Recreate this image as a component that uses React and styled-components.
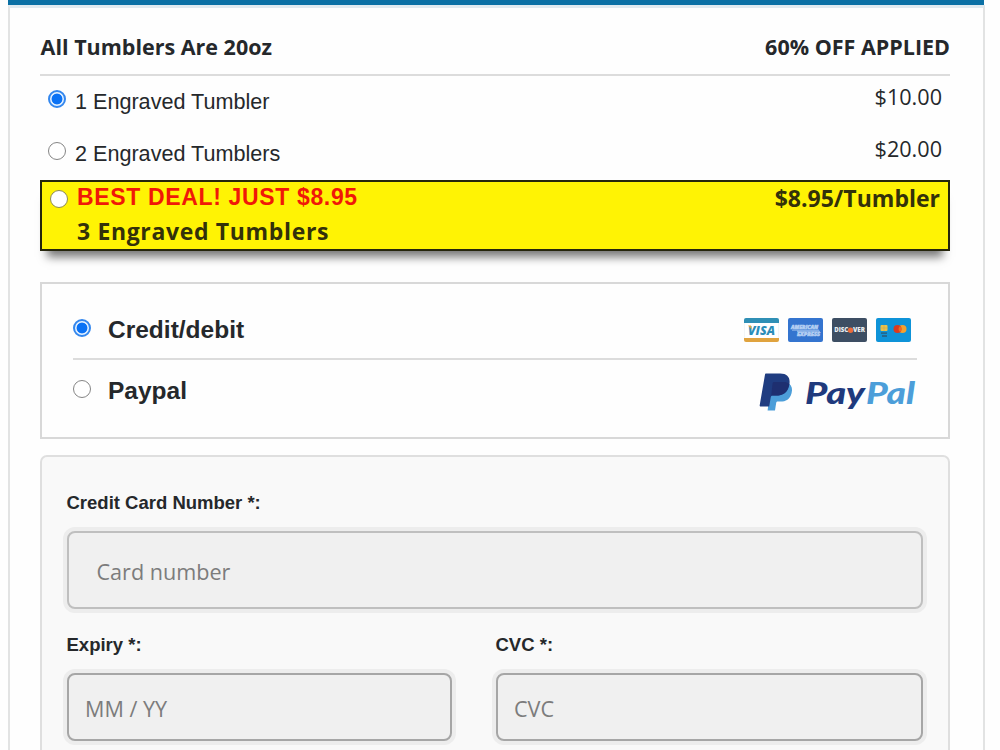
import React from "react";
import styled, { createGlobalStyle, css } from "styled-components";

const openSans = `"Open Sans", "Noto Sans", sans-serif`;
const arial = `"Liberation Sans", Arial, sans-serif`;

const App = () => {
  return (
    <Page>
      <GlobalStyle />
      <TopBar />
      <Panel>
        <Header>
          <HeaderText>All Tumblers Are 20oz</HeaderText>
          <HeaderText>60% OFF APPLIED</HeaderText>
        </Header>
        <Option>
          <Radio type="radio" name="qty" defaultChecked />
          <OptionLabel>1 Engraved Tumbler</OptionLabel>
          <Price>$10.00</Price>
        </Option>
        <Option>
          <Radio type="radio" name="qty" />
          <OptionLabel>2 Engraved Tumblers</OptionLabel>
          <Price>$20.00</Price>
        </Option>
        <BestDeal>
          <Radio type="radio" name="qty" />
          <DealText>
            <DealTitle>BEST DEAL! JUST $8.95</DealTitle>
            <DealName>3 Engraved Tumblers</DealName>
          </DealText>
          <DealPrice>$8.95/Tumbler</DealPrice>
        </BestDeal>

        <Payment>
          <Method $divider>
            <Radio type="radio" name="method" defaultChecked />
            <MethodLabel>Credit/debit</MethodLabel>
            <Cards>
              <Visa />
              <Amex />
              <Discover />
              <Mastercard />
            </Cards>
          </Method>
          <Method>
            <Radio type="radio" name="method" />
            <MethodLabel>Paypal</MethodLabel>
            <PayPalLogo />
          </Method>
        </Payment>

        <CardForm>
          <Field>
            <FieldLabel>Credit Card Number *:</FieldLabel>
            <Input $large placeholder="Card number" />
          </Field>
          <FieldRow>
            <Field>
              <FieldLabel>Expiry *:</FieldLabel>
              <Input placeholder="MM / YY" />
            </Field>
            <Field>
              <FieldLabel>CVC *:</FieldLabel>
              <Input placeholder="CVC" />
            </Field>
          </FieldRow>
        </CardForm>
      </Panel>
    </Page>
  );
};

const Visa = () => (
  <CardIcon viewBox="0 0 35 24">
    <rect x="0.4" y="0.4" width="34.2" height="23.2" rx="2" fill="#fff" />
    <path d="M0 5V2a2 2 0 0 1 2-2h31a2 2 0 0 1 2 2v3z" fill="#2f8fb5" />
    <path d="M0 20h35v2a2 2 0 0 1-2 2H2a2 2 0 0 1-2-2z" fill="#e0a33e" />
    <path d="M0.3 5v15M34.7 5v15" stroke="#e6ecee" strokeWidth="0.6" />
    <LogoText x="4" y="17" fontSize="13" textLength="27" fill="#2c8db8">
      VISA
    </LogoText>
    <path d="M4 7.6h3l1 4z" fill="#e0a33e" />
  </CardIcon>
);

const Amex = () => (
  <CardIcon viewBox="0 0 35 24">
    <rect width="35" height="24" rx="2" fill="#3474cf" />
    <path d="M4 12.2h27M9 13.4h23" stroke="#85aee6" strokeWidth="1.2" />
    <g fill="#b3cef2" stroke="#b3cef2" strokeWidth="0.5">
      <LogoText x="3" y="11" fontSize="4.6" textLength="27">
        AMERICAN
      </LogoText>
      <LogoText x="9" y="17.5" fontSize="4.6" textLength="23">
        EXPRESS
      </LogoText>
    </g>
  </CardIcon>
);

const Discover = () => (
  <CardIcon viewBox="0 0 35 24">
    <rect width="35" height="24" rx="2" fill="#3d4e63" />
    <PlainLogoText x="2.2" y="14.4" fontSize="6.2" textLength="14" fill="#e9edf0">
      DISC
    </PlainLogoText>
    <circle cx="18.6" cy="12.2" r="2.7" fill="#ea6b39" />
    <PlainLogoText x="21" y="14.4" fontSize="6.2" textLength="12" fill="#e9edf0">
      VER
    </PlainLogoText>
  </CardIcon>
);

const Mastercard = () => (
  <CardIcon viewBox="0 0 35 24">
    <rect width="35" height="24" rx="2" fill="#0e93d8" />
    <rect x="4.5" y="7" width="7" height="6" rx="1" fill="#e9c24c" />
    <path d="M4.5 10h7M8 7v6" stroke="#c9a94f" strokeWidth="0.6" />
    <path d="M5 15.2h6M6 18h5" stroke="#24688f" strokeWidth="1.8" />
    <circle cx="26.5" cy="11" r="4" fill="#f5a02c" />
    <circle cx="21.5" cy="11" r="4" fill="#dc3a1e" />
    <path d="M24 7.9a4 4 0 0 1 0 6.2a4 4 0 0 1 0-6.2z" fill="#ee6a22" />
  </CardIcon>
);

const PayPalLogo = () => (
  <PayPalSvg viewBox="0 0 158 40">
    <path
      d="M30 10.500c3 2.400 3.600 5.600 2.600 9.400-1.600 6.200-5.600 8.600-11.400 8.600h-2.400c-.8 0-1.400.5-1.600 1.300l-1.200 7.700H8.600L12 10.500z"
      fill="#4c9ed9"
    />
    <path
      d="M6.800.5h14.400c7.400 0 10.500 4.400 9.100 11.400C28.700 19.500 24.400 22.600 16.800 22.600h-3.200c-1 0-1.600.6-1.800 1.500L10.200 33.500H1.800c-.8 0-1.200-.5-1.100-1.200L6 1.500c.1-.6.400-1 .8-1z"
      fill="#1f3c80"
    />
    <path
      d="M30.200 11c-1.500 7.900-5.800 11.600-13.700 11.600h-3.200c-.4 0-.8.1-1.100.3L13.500 10.700c.2-1 .8-1.600 1.800-1.600h9.200c2.400 0 4.200.6 5.700 1.900z"
      fill="#1e2f70"
    />
    <WordMark x="46" y="31" fontSize="31" textLength="60" fill="#1f3a7d">
      Pay
    </WordMark>
    <WordMark x="107" y="31" fontSize="31" textLength="49" fill="#4c9ed9">
      Pal
    </WordMark>
  </PayPalSvg>
);

const GlobalStyle = createGlobalStyle`
  * {
    box-sizing: border-box;
  }
  body {
    margin: 0;
    background: #fefefe;
    overflow: hidden;
  }
`;

const Page = styled.div`
  width: 977px;
  height: 750px;
  margin-left: 8px;
  overflow: hidden;
  color: #25282b;
`;

const TopBar = styled.div`
  width: 976px;
  height: 5px;
  background: #0a70a5;
`;

const Panel = styled.div`
  height: 800px;
  padding: 0 33px 0 30px;
  border: 2px solid #e2e3e3;
  border-top: 3px solid #dfeaf0;
  background: #fefefe;
`;

const Header = styled.div`
  display: flex;
  justify-content: space-between;
  height: 68px;
  padding-top: 12px;
  border-bottom: 2px solid #dcdcdc;
`;

const HeaderText = styled.div`
  font: 700 21.5px/54px ${openSans};
  &:first-child {
    margin-left: 0.6px;
  }
`;

const Radio = styled.input`
  appearance: none;
  flex-shrink: 0;
  width: 18px;
  height: 18px;
  margin: 0;
  border: 1.5px solid #858585;
  border-radius: 50%;
  background: #fff;
  &:checked {
    border: 2px solid #3387ee;
    background: radial-gradient(circle, #0a72f5 5px, #e4f1ff 5.8px);
  }
`;

const Option = styled.div`
  display: flex;
  align-items: flex-start;
  height: 52px;
  padding: 0 8px;
  ${Radio} {
    margin-top: 14px;
  }
`;

const OptionLabel = styled.label`
  margin: 11px 0 0 9px;
  font: 400 21.6px/30px ${arial};
`;

const Price = styled.div`
  margin: 6px 0 0 auto;
  font: 400 21.6px/30px ${openSans};
`;

const BestDeal = styled.div`
  display: flex;
  align-items: flex-start;
  height: 71px;
  padding: 0 8px;
  border: 2px solid #25250c;
  background: #fff304;
  box-shadow: 0 13px 9px -7px #777;
  ${Radio} {
    margin-top: 8px;
    border-color: #8d8a55;
  }
`;

const DealText = styled.div`
  margin-left: 9px;
`;

const DealTitle = styled.div`
  color: #f01808;
  font: 700 23px/30px ${arial};
  letter-spacing: 0.65px;
`;

const DealName = styled.div`
  margin-top: 4px;
  color: #33310a;
  font: 700 23px/30px ${openSans};
  letter-spacing: 0.65px;
`;

const DealPrice = styled.div`
  margin: 1px 0 0 auto;
  color: #33310a;
  font: 700 23px/31px ${openSans};
`;

const Payment = styled.div`
  height: 157px;
  margin-top: 31px;
  padding: 14px 31px;
  border: 2px solid #d8d8d8;
`;

const Method = styled.div`
  display: flex;
  align-items: flex-start;
  height: 62px;
  padding-top: ${(props) => (props.$divider ? "21px" : "20px")};
  ${(props) =>
    props.$divider &&
    css`
      border-bottom: 2px solid #dcdcdc;
    `}
`;

const MethodLabel = styled.label`
  margin: -4px 0 0 17px;
  font: 700 24.5px/30px ${arial};
`;

const Cards = styled.div`
  display: flex;
  gap: 9px;
  margin: -1.5px 6.5px 0 auto;
`;

const CardIcon = styled.svg`
  display: block;
  width: 35px;
  height: 24px;
`;

const LogoText = styled.text.attrs({ lengthAdjust: "spacingAndGlyphs" })`
  font-family: ${openSans};
  font-weight: 800;
  font-style: italic;
`;

const PlainLogoText = styled(LogoText)`
  font-style: normal;
`;

const PayPalSvg = styled.svg`
  width: 158px;
  height: 40px;
  margin: -7px 0 0 auto;
`;

const WordMark = styled.text.attrs({ lengthAdjust: "spacingAndGlyphs" })`
  font-family: Lato, sans-serif;
  font-weight: 900;
  font-style: italic;
`;

const CardForm = styled.div`
  height: 340px;
  margin-top: 16px;
  padding: 31px 25px 0;
  border: 2px solid #dfdfdf;
  border-radius: 7px;
  background: #f9f9f9;
`;

const Field = styled.div`
  display: flex;
  flex-direction: column;
`;

const FieldRow = styled.div`
  display: grid;
  grid-template-columns: 385px 427px;
  column-gap: 44px;
  margin-top: 21px;
`;

const FieldLabel = styled.label`
  margin: 0 0 13px -0.5px;
  font: 700 18.5px/30px ${arial};
`;

const Input = styled.input`
  width: 100%;
  height: ${(props) => (props.$large ? "78px" : "68px")};
  padding: ${(props) => (props.$large ? "2px 27.5px 0" : "2px 16px 0")};
  border: 2px solid ${(props) => (props.$large ? "#bfbfbf" : "#a6a6a6")};
  border-radius: 8px;
  outline: none;
  background: #f0f0f0;
  box-shadow: 0 0 0 4px #ededed;
  font: 400 21.6px/30px ${openSans};
  &::placeholder {
    color: #7c7c7c;
    opacity: 1;
  }
`;

export default App;
